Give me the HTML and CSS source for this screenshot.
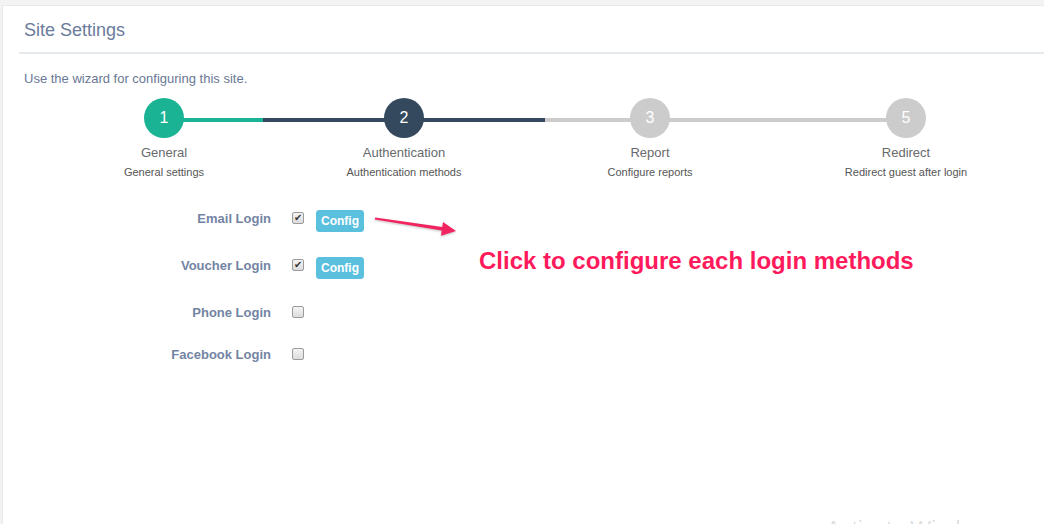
FILE: index.html
```html
<!DOCTYPE html>
<html>
<head>
<meta charset="utf-8">
<title>Site Settings</title>
<link rel="stylesheet" href="styles.css">
</head>
<body>
<div class="panel">
  <div class="panel-header">
    <h2 class="panel-title">Site Settings</h2>
  </div>
  <p class="intro">Use the wizard for configuring this site.</p>

  <div class="wizard">
    <div class="step done first">
      <div class="step-circle">1</div>
      <div class="step-title">General</div>
      <div class="step-sub">General settings</div>
    </div>
    <div class="step active">
      <div class="step-circle">2</div>
      <div class="step-title">Authentication</div>
      <div class="step-sub">Authentication methods</div>
    </div>
    <div class="step">
      <div class="step-circle">3</div>
      <div class="step-title">Report</div>
      <div class="step-sub">Configure reports</div>
    </div>
    <div class="step last">
      <div class="step-circle">5</div>
      <div class="step-title">Redirect</div>
      <div class="step-sub">Redirect guest after login</div>
    </div>
  </div>

  <div class="login-form">
    <div class="form-row">
      <label class="form-label">Email Login</label>
      <input type="checkbox" class="check" checked>
      <button class="btn-config">Config</button>
    </div>
    <div class="form-row">
      <label class="form-label">Voucher Login</label>
      <input type="checkbox" class="check" checked>
      <button class="btn-config">Config</button>
    </div>
    <div class="form-row tight">
      <label class="form-label">Phone Login</label>
      <input type="checkbox" class="check">
    </div>
    <div class="form-row">
      <label class="form-label">Facebook Login</label>
      <input type="checkbox" class="check">
    </div>
  </div>

  <svg class="arrow" width="95" height="32" viewBox="0 0 95 32">
    <polygon points="5.2,7.5 72.3,17 73,11.9 86,21 71,25.7 71.7,20.6 4.8,9.5" fill="#f2245f"/>
  </svg>
  <div class="callout">Click to configure each login methods</div>
</div>
<div class="watermark">Activate Windows</div>
</body>
</html>
```

FILE: styles.css
```css
* { box-sizing: border-box; }

html, body {
  margin: 0;
  height: 100%;
  overflow: hidden;
}

body {
  background: #f3f3f4;
  font-family: "Liberation Sans", Arial, sans-serif;
  position: relative;
}

.panel {
  position: relative;
  margin: 5px 0 0 2px;
  height: 519px;
  background: #fff;
  border-top: 1px solid #e7eaec;
  border-left: 1px solid #e7eaec;
  padding-left: 16px;
}

.panel-header {
  height: 48px;
  border-bottom: 2px solid #e7eaec;
}

.panel-title {
  margin: 0;
  padding: 1px 0 0 5px;
  font-size: 18px;
  font-weight: normal;
  line-height: 46px;
  color: #6b7b9b;
}

.intro {
  margin: 16px 0 0 5px;
  font-size: 13px;
  line-height: 18px;
  color: #6a7895;
}

.wizard {
  display: grid;
  grid-template-columns: 198px 282px 210px 302px;
  margin: 10px 0 0 46px;
}

.step {
  position: relative;
  text-align: center;
}

.step::before,
.step::after {
  content: "";
  position: absolute;
  top: 20px;
  height: 4px;
  width: 50%;
  background: #cccccc;
}

.step::before { left: 0; }
.step::after { right: 0; }

.step.first::before,
.step.last::after { display: none; }

.step.done::after { background: #1ab394; }
.step.active::before,
.step.active::after { background: #34495e; }

.step-circle {
  position: relative;
  z-index: 1;
  width: 40px;
  height: 40px;
  margin: 0 auto;
  border-radius: 50%;
  background: #cccccc;
  color: #fff;
  font-size: 16px;
  line-height: 40px;
}

.step.done .step-circle { background: #1ab394; }
.step.active .step-circle { background: #34495e; }

.step-title {
  margin-top: 6px;
  font-size: 13px;
  line-height: 18px;
  color: #676a6c;
}

.step-sub {
  margin-top: 2px;
  font-size: 11px;
  line-height: 16px;
  color: #555;
}

.login-form {
  margin-top: 27px;
}

.form-row {
  display: flex;
  align-items: center;
  height: 22px;
  margin-bottom: 25px;
}

.form-row.tight { margin-bottom: 20px; }

.form-label {
  width: 252px;
  margin-right: 21px;
  text-align: right;
  font-size: 13px;
  font-weight: bold;
  color: #7384a3;
}

.check {
  -webkit-appearance: none;
  appearance: none;
  position: relative;
  width: 12px;
  height: 12px;
  margin: 0 12px 0 0;
  border: 1px solid #9b9b9b;
  border-radius: 2px;
  background: linear-gradient(#f4f4f4, #dcdcdc);
}

.check:checked::before {
  content: "✔";
  position: absolute;
  left: 1px;
  top: -2px;
  font-size: 10px;
  line-height: 14px;
  color: #333;
}

.btn-config {
  height: 22px;
  margin-top: 6px;
  padding: 1px 4px;
  border: 1px solid #5bc0de;
  border-radius: 3px;
  background: #5bc0de;
  color: #fff;
  font-family: "Liberation Sans", Arial, sans-serif;
  font-size: 12px;
  font-weight: bold;
  line-height: 18px;
}

.arrow {
  position: absolute;
  left: 367px;
  top: 204px;
  filter: drop-shadow(0 1px 1px rgba(0,0,0,0.25));
}

.callout {
  position: absolute;
  left: 476px;
  top: 241px;
  font-size: 24px;
  font-weight: bold;
  line-height: 28px;
  color: #ff1a5c;
}

.watermark {
  position: absolute;
  left: 826px;
  top: 516px;
  font-family: "Liberation Sans", Arial, sans-serif;
  font-size: 22px;
  line-height: 26px;
  color: rgba(0,0,0,0.15);
}
```
